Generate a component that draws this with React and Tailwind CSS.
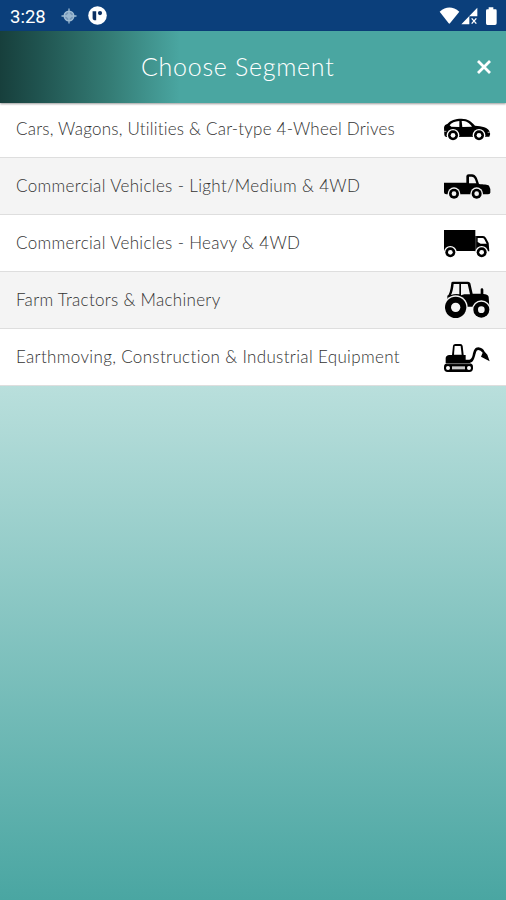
import React from 'react';

function Wheel({ x, y, r = 14, hole = 6, bg = '#fff' }) {
  return (
    <g>
      <circle cx={x} cy={y} r={r + 4} fill={bg} />
      <circle cx={x} cy={y} r={r} fill="#000" />
      <circle cx={x} cy={y} r={hole} fill={bg} />
    </g>
  );
}

function Car() {
  return (
    <>
      <path d="M28 89 L27 68 Q28 59 37 57 C47 45 61 41 79 41 C100 41 109 50 120 62 C140 63 160 67 163 79 Q168 87 163 95 L34 96 Q28 95 28 89Z" />
      <path d="M73 48 C59 49 50 52 44 61 L49 65 L73 66Z M80 48 L82 66 L111 65 C103 54 96 48 80 48Z" fill="#fff" />
      <path d="M27 79 H34 M158 82 H164" stroke="#aaa" strokeWidth="3" />
      <Wheel x={54} y={91} r={15} hole={7} />
      <Wheel x={132} y={91} r={15} hole={7} />
    </>
  );
}

function Pickup() {
  return (
    <>
      <path d="M27 68 H94 V49 Q94 43 101 43 H111 C123 43 127 56 132 72 C145 73 158 74 162 77 L166 87 V98 Q165 103 158 103 H34 Q27 103 27 97Z" />
      <path d="M102 50 H110 C118 50 121 60 124 70 H102Z" fill="#f4f4f4" />
      <Wheel x={57} y={101} r={15} hole={7} bg="#f4f4f4" />
      <Wheel x={125} y={101} r={15} hole={7} bg="#f4f4f4" />
    </>
  );
}

function Truck() {
  return (
    <>
      <path d="M27 36 H121 V99 H27Z M119 54 H144 Q150 54 153 60 L161 75 L163 100 H119Z" />
      <path d="M128 60 H142 Q146 60 148 64 L155 77 H137 L128 72Z" fill="#fff" />
      <path d="M122.5 54V99" stroke="#999" strokeWidth="1.5" />
      <Wheel x={46} y={103} r={15} hole={7} />
      <Wheel x={140} y={103} r={15} hole={7} />
    </>
  );
}

function Tractor() {
  return (
    <>
      <path d="M49 27 Q49 23 54 23 H99 Q104 23 106 28 L113 59 H137 V46 Q137 43 141 43 Q145 43 145 47 V60 Q158 61 161 68 L163 98 H37 V65 Q45 64 49 27Z" />
      <path d="M56 30 H73 V61 Q60 59 48 63 Q54 52 56 30Z M78 30 H98 L105 61 H88 L78 64Z" fill="#f4f4f4" />
      <circle cx="62" cy="100" r="36" fill="#f4f4f4" />
      <circle cx="62" cy="100" r="32" />
      <circle cx="62" cy="100" r="14" fill="#f4f4f4" />
      <Wheel x={139} y={107} r={24} hole={10} bg="#f4f4f4" />
    </>
  );
}

function Excavator() {
  return (
    <>
      <path d="M51 75 L54 47 Q55 42 61 42 H76 Q82 42 83 48 L86 75 H92 V89 H103 Q110 88 113 75 C116 62 119 52 130 52 Q143 53 149 65 L157 74 L164 94 L138 80 L143 68 Q137 60 130 60 C123 60 123 70 119 81 Q115 97 104 99 H32 V84 Q33 76 43 75Z" />
      <path d="M59 48 H77 L80 74 H57Z" fill="#fff" />
      <rect x="27" y="100" width="87" height="26" rx="11" />
      <path d="M35 101 H106" stroke="#888" strokeWidth="2" />
      <circle cx="39" cy="114" r="6" fill="#fff" />
      <circle cx="102" cy="114" r="6" fill="#fff" />
      <path d="M51 109 H90 V118 H51Z" fill="#ccc" />
    </>
  );
}

const rows = [
  { label: 'Cars, Wagons, Utilities & Car-type 4-Wheel Drives', Icon: Car, row: 'h-[55px] bg-white pb-[2px]', text: 'tracking-[0.21px]', icon: 'mt-[2px]' },
  { label: 'Commercial Vehicles - Light/Medium & 4WD', Icon: Pickup, row: 'h-[57px] bg-[#f4f4f4]', text: 'tracking-[0.34px]', icon: 'mt-[2px]' },
  { label: 'Commercial Vehicles - Heavy & 4WD', Icon: Truck, row: 'h-[57px] bg-white', text: 'tracking-[0.34px]', icon: 'mt-[3px]' },
  { label: 'Farm Tractors & Machinery', Icon: Tractor, row: 'h-[57px] bg-[#f4f4f4]', text: 'tracking-[0.3px]', icon: 'mt-[2px]' },
  { label: 'Earthmoving, Construction & Industrial Equipment', Icon: Excavator, row: 'h-[57px] bg-white', text: 'tracking-[0.34px]', icon: 'mt-[1px]' },
];

function StatusBar() {
  return (
    <div className="flex h-[31px] shrink-0 items-center bg-[#0b3f7b] pl-[10px] text-white">
      <span className="w-[51px] pt-[3px] font-[Roboto,sans-serif] text-[18.5px] leading-[28px] whitespace-nowrap">3:28</span>
      <svg className="h-4 w-4" viewBox="0 0 16 16" fill="none" stroke="#9fbcd3">
        <circle cx="8" cy="8" r="4.8" fill="#7898b8" strokeWidth="1.4" />
        <circle cx="8" cy="8" r="2" />
        <path d="M8 0.5V15.5M0.5 8H15.5" strokeWidth="1.3" />
      </svg>
      <svg className="ml-[11px] h-[19px] w-[19px]" viewBox="0 0 19 19">
        <circle cx="9.5" cy="9.5" r="9.3" fill="#fff" />
        <path d="M4.6 5.2H8.2V14.3Q4.6 14.6 4.6 12Z" fill="#0b2f62" />
        <circle cx="12" cy="7.1" r="2.1" fill="#0b2f62" />
      </svg>
      <svg className="ml-auto h-[31px] w-[76px]" viewBox="0 0 228 93" fill="#fff">
        <path d="M29 35 Q58 10 88 35 L60 70 Q58 72 56 70Z" />
        <path d="M142 23V49H118V73H94Z" />
        <path d="M125 55L139 71M139 55L125 71" stroke="#fff" strokeWidth="4" />
        <path d="M176 22H190V28H197Q200 28 200 32V70Q200 75 195 75H172Q168 75 168 70V32Q168 28 172 28H176Z" />
      </svg>
    </div>
  );
}

export default function App() {
  return (
    <div className="flex h-[900px] w-[506px] flex-col overflow-hidden bg-white font-[Lato,sans-serif]">
      <StatusBar />
      <header className="z-10 flex h-[72px] shrink-0 items-center bg-[linear-gradient(90deg,#173f3c_0px,#205450_40px,#347c75_110px,#4aa6a1_180px)] pl-[141px] shadow-[0_1px_2px_rgba(0,0,0,0.4)]">
        <h1 className="pb-[2px] text-[25px] leading-[30px] font-light tracking-[0.72px] whitespace-nowrap text-white">Choose Segment</h1>
        <svg className="mr-[14px] ml-auto h-4 w-4" viewBox="0 0 16 16" stroke="#fff" strokeWidth="2.8">
          <path d="M2 2L14 14M14 2L2 14" />
        </svg>
      </header>
      <ul className="shrink-0">
        {rows.map(({ label, Icon, row, text, icon }) => (
          <li key={label} className={`flex items-center justify-between border-b border-[#dedede] pl-4 ${row}`}>
            <span className={`text-[17px] leading-6 font-light whitespace-nowrap text-[#333] ${text}`}>{label}</span>
            <svg className={`h-[52px] w-[71px] shrink-0 self-start ${icon}`} viewBox="0 0 213 156">
              <Icon />
            </svg>
          </li>
        ))}
      </ul>
      <main className="flex-1 bg-[linear-gradient(180deg,#b9dfdc_0%,#4aa6a2_100%)]" />
    </div>
  );
}
